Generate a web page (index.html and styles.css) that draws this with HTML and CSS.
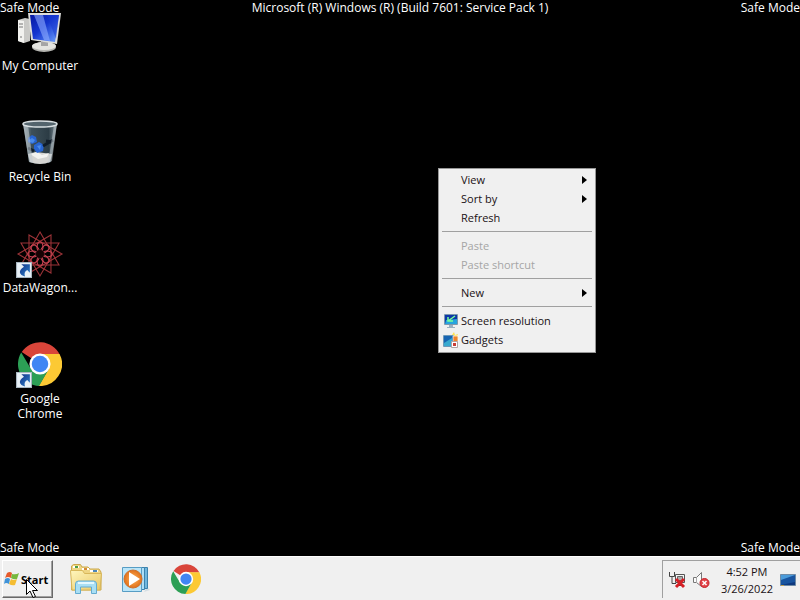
FILE: index.html
```html
<!DOCTYPE html>
<html lang="en">
<head>
<meta charset="utf-8">
<title>Desktop</title>
<link rel="stylesheet" href="styles.css">
</head>
<body>
<svg class="defs" aria-hidden="true">
  <defs>
    <linearGradient id="screen" x1="0" y1="0" x2="1" y2="1"><stop offset="0" stop-color="#0618a0"/><stop offset=".45" stop-color="#1435d0"/><stop offset="1" stop-color="#6fa4ff"/></linearGradient>
    <linearGradient id="glass" x1="0" y1="0" x2="1" y2="0"><stop offset="0" stop-color="#8b9ba2"/><stop offset=".25" stop-color="#3e5059"/><stop offset=".75" stop-color="#2c3c45"/><stop offset="1" stop-color="#84949b"/></linearGradient>
    <linearGradient id="folder" x1="0" y1="0" x2="1" y2="1"><stop offset="0" stop-color="#fff6bd"/><stop offset="1" stop-color="#e9c765"/></linearGradient>
    <linearGradient id="arrow" x1="0" y1="0" x2="1" y2="1"><stop offset="0" stop-color="#12358a"/><stop offset="1" stop-color="#2d7fc8"/></linearGradient>
    <radialGradient id="orange"><stop offset="0" stop-color="#ffb45a"/><stop offset="1" stop-color="#e0701a"/></radialGradient>
    <symbol id="chrome" viewBox="0 0 48 48">
      <path fill="#d9453a" d="M24 24 4.1 11A24 24 0 0 1 45.5 13.500H24Z"/>
      <path fill="#fcc934" d="M24 13h21.300A24 24 0 0 1 22.500 48L33.500 29.500Z"/>
      <path fill="#2c9f55" d="M3.500 11.500 14.500 30l9.500 5 9-4.500L23 48A24 24 0 0 1 3.500 11.500Z"/>
      <circle cx="24" cy="24" r="11.500" fill="#fff"/><circle cx="24" cy="24" r="9" fill="#4086f4"/>
    </symbol>
    <symbol id="shortcut" viewBox="0 0 15 15">
      <path fill="#e8f1f7" stroke="#a8b6c0" d="M.5.5h14v14H.5z"/>
      <path fill="url(#arrow)" d="M5 2h8v8l-2.500-2.500C8 9 7.500 11 8.500 13.500 3 12.500 1.500 8 7.500 4.500Z"/>
    </symbol>
  </defs>
</svg>

<main class="desktop">
  <header class="watermark"><span>Safe Mode</span><span>Microsoft (R) Windows (R) (Build 7601: Service Pack 1)</span><span>Safe Mode</span></header>

  <nav class="shortcuts" aria-label="Desktop icons">
    <button class="shortcut">
      <svg viewBox="0 0 48 48">
        <path fill="#c9c9c6" d="m2 12 7-2 5 1v22l-6 2-6-2Z"/><path fill="#f2f2ef" d="m2 12 6 1v22l-6-2Z"/><path stroke="#777" d="M3 16h4M3 19h4M4 29h2"/>
        <path fill="#aaa" d="m27 33 8 1v6h-9Z"/><ellipse cx="28" cy="39" rx="12" ry="5" fill="#b5b5b1"/><ellipse cx="28" cy="38" rx="12" ry="4" fill="#e4e4e0"/><path fill="#a5a5a5" d="m25 33 7 1v4h-7Z"/>
        <path fill="#ddddda" d="m12 5 33 0-4 31-26-4Z"/><path fill="url(#screen)" d="m14 7 29 0-4 27-22-3Z"/><path fill="#8dabff" opacity=".6" d="m18 7 9 0 7 26-6-1Z"/><path fill="#1839cf" opacity=".5" d="m31 7 12 0-3 24Z"/>
      </svg>
      <span>My Computer</span>
    </button>
    <button class="shortcut">
      <svg viewBox="0 0 48 48">
        <path fill="url(#glass)" d="M7 4h34l-6 39q-11 4-22 0Z"/><path fill="#d5d5d2" d="m12 35 8-2 8 1 8 1-2 8q-10 4-20 0Z"/><path fill="#f3f3f0" d="m14 35 7-2 5 3 7-2-2 4-9 2Z"/>
        <path fill="#2865d2" d="m12 19 4-3 4 2 1 5-5 2-4-2Zm6 7 5-3 5 3-1 6-6 2-3-4Z"/><path fill="#4a8bea" d="m13 21 3-2 3 2-2 3-3-1Zm8 6 4-1-1 5Z"/><path fill="none" stroke="#101c29" stroke-width="3" d="m12 29 6 3m9-5 10-6m-7 1 6 1"/>
        <path fill="#c1cbd0" opacity=".55" d="m7 5 5 1 5 38-4-1Zm34 0-3 1-6 38 4-2Z"/><ellipse cx="24" cy="5" rx="17" ry="3" fill="#53646d" stroke="#d8dfe2" stroke-width="1.500"/>
      </svg>
      <span>Recycle Bin</span>
    </button>
    <button class="shortcut">
      <svg viewBox="0 0 48 48">
        <g fill="none" stroke="#9c3338" stroke-width="1.100">
          <g id="square"><path d="M24 2 43 35H5Z"/></g>
          <use href="#square" transform="rotate(30 24 24)"/><use href="#square" transform="rotate(60 24 24)"/><use href="#square" transform="rotate(90 24 24)"/>
          <g stroke="#cf4657">
            <ellipse id="petal" cx="24" cy="17" rx="3" ry="5"/>
            <use href="#petal" transform="rotate(45 24 24)"/><use href="#petal" transform="rotate(90 24 24)"/><use href="#petal" transform="rotate(135 24 24)"/><use href="#petal" transform="rotate(180 24 24)"/><use href="#petal" transform="rotate(225 24 24)"/><use href="#petal" transform="rotate(270 24 24)"/><use href="#petal" transform="rotate(315 24 24)"/>
          </g>
        </g>
        <circle cx="24" cy="24" r="4" fill="#160204"/><use href="#shortcut" x="0" y="32" width="16" height="16"/>
      </svg>
      <span>DataWagon...</span>
    </button>
    <button class="shortcut">
      <svg viewBox="0 0 48 48"><use href="#chrome" x="2" y="1" width="44" height="44"/><use href="#shortcut" x="0" y="31" width="16" height="16"/></svg>
      <span>Google Chrome</span>
    </button>
  </nav>

  <div class="menu" role="menu">
    <button role="menuitem"><i></i><span>View</span><b></b></button>
    <button role="menuitem"><i></i><span>Sort by</span><b></b></button>
    <button role="menuitem"><i></i><span>Refresh</span></button>
    <hr>
    <button role="menuitem" disabled><i></i><span>Paste</span></button>
    <button role="menuitem" disabled><i></i><span>Paste shortcut</span></button>
    <hr>
    <button role="menuitem"><i></i><span>New</span><b></b></button>
    <hr>
    <button role="menuitem"><i><svg viewBox="0 0 16 16"><path fill="#c8d8e4" stroke="#7c98ad" d="M1.500 1.500h13v10h-13z"/><path fill="#0d36a8" d="M2 2h12v9H2z"/><path fill="#27a4de" d="m2 11 1-4 11-1v5Z"/><path d="m12 3-7 5m0-4v4h5" fill="none" stroke="#7cff96" stroke-width="1.500"/><path fill="#9ab0c0" d="M6 12h4v2h2v1H4v-1h2Z"/></svg></i><span>Screen resolution</span></button>
    <button role="menuitem"><i><svg viewBox="0 0 16 16"><path fill="#ffe14b" d="m11 0 1 3 3-1-1 3 2 1-5 2-2-5Z"/><path fill="#d9edf8" stroke="#6c98b8" d="M.5 3.500h10v11H.5z"/><path fill="#1765b2" d="M1 4h9v10H1z"/><path fill="#37a9cf" d="m1 11 8-5v8H1Z"/><path fill="#ef842b" stroke="#fff" stroke-width=".7" d="M10 4h5v6h-5z"/><path fill="#fff" stroke="#b0a4a4" d="M8.500 9.500h6v6h-6z"/><path fill="#c83e37" d="M10 11h3v3h-3z"/></svg></i><span>Gadgets</span></button>
  </div>

  <footer class="watermark"><span>Safe Mode</span><span>Safe Mode</span></footer>
</main>

<div class="taskbar">
  <button class="start">
    <svg viewBox="0 0 16 16"><path fill="#e65a2b" d="M3 2q3-2 5 0L7 7Q4 5 1 7Z"/><path fill="#77b83d" d="M8 3q4 1 7-1l-2 6q-3 1-6-1Z"/><path fill="#4093d8" d="M1 8q3-2 5 0l-1 5q-3-2-5 0Z"/><path fill="#f5bd32" d="M7 8q3 2 6 0l-2 6q-3 1-6-1Z"/></svg>
    <span>Start</span>
  </button>
  <nav class="pinned" aria-label="Pinned programs">
    <button class="pin" aria-label="Explorer"><svg viewBox="0 0 34 32"><path fill="#efd583" stroke="#cba84b" d="M2.500 27V3l2-1.500h7L13 4h6l2 2h9l2 3v18Z"/><path fill="#fff" d="M4 3h6v2H4zm9 2h7v2h-7zm8 2h8v2h-8z"/><path stroke="#4b9d45" stroke-width="2" d="M6 4h3"/><path stroke="#d38a3a" stroke-width="2" d="M15 6h3"/><path stroke="#4b86b9" stroke-width="2" d="M24 8h4"/><path fill="url(#folder)" stroke="#d8b75a" d="M1.500 7.500h12l2 3h17L31 27H3Z"/><path fill="#a9dff4" stroke="#64abd0" d="M6.500 30.500V21q0-3 3-3h15q3 0 3 3v9.500h-5V24h-11v6.500Z"/><path stroke="#e3f8ff" stroke-width="2" d="M9 20h16"/></svg></button>
    <button class="pin" aria-label="Media Player"><svg viewBox="0 0 32 32"><path fill="#d4dee4" d="m24 29 6-2-3-3Z"/><path fill="#70b7de" stroke="#3c83ad" d="M9.500 4.500h18v21h-18z"/><path fill="#afdef6" stroke="#3c83ad" d="M6.500 4.500h18v22h-18z"/><path fill="#b9e5f9" stroke="#579dc4" d="M2.500 4.500h19v24h-19z"/><circle cx="13" cy="16" r="9" fill="url(#orange)" stroke="#cc702d"/><path fill="#fff" d="m9 9 11 7-11 7Z"/></svg></button>
    <button class="pin" aria-label="Chrome"><svg viewBox="0 0 32 32"><use href="#chrome" x="1" y="1" width="30" height="30"/></svg></button>
  </nav>
  <div class="tray">
    <button class="tray-icon" aria-label="Network"><svg viewBox="0 0 18 18"><path fill="#f5f5f5" stroke="#555" d="M7.500 3.500h9v8h-9z"/><path fill="#aaa" stroke="#666" d="M9.500 5.500h5v4h-5z"/><path fill="none" stroke="#444" d="M1.500 1v4.500h5V1M4 6v6.500h4M8 14.500h8"/><path stroke="#d51f25" stroke-width="3" d="m8 8 8 8m0-8-8 8"/></svg></button>
    <button class="tray-icon" aria-label="Volume"><svg viewBox="0 0 18 18"><path fill="#fafafa" stroke="#777" d="M1.500 6.500h3l5-5v14l-5-4h-3Z"/><path stroke="#aaa" d="M4.500 7v5"/><circle cx="12.500" cy="12" r="4.500" fill="#e24247" stroke="#c6242b"/><path stroke="#fff" stroke-width="1.500" d="m10.500 10 4 4m0-4-4 4"/></svg></button>
    <button class="clock"><span>4:52 PM</span><span>3/26/2022</span></button>
    <button class="tray-icon" aria-label="Show desktop"><svg viewBox="0 0 18 18"><path fill="#18549f" stroke="#6e8ba6" d="M1.500 3.500h15v11h-15z"/><path fill="#4b9bda" d="M2 4h14L2 9Z"/><path fill="#0e397f" d="M2 14h14v-3Z"/><path fill="#c8a14b" d="M2 14h3v1H2z"/></svg></button>
  </div>
</div>
<svg class="cursor" viewBox="0 0 12 19" aria-hidden="true"><path fill="#fff" stroke="#000" d="M.5.500v15l3.500-3.500 3 6.500 2.500-1-3-6h5Z"/></svg>
</body>
</html>
```
FILE: styles.css
```css
* {
  box-sizing: border-box;
}

body {
  display: flex;
  flex-direction: column;
  min-height: 100vh;
  margin: 0;
  background: #000;
  color: #fff;
  font: 12px/15px "Open Sans", "Noto Sans", sans-serif;
}

button {
  margin: 0;
  padding: 0;
  border: 0;
  background: none;
  color: inherit;
  font: inherit;
}

svg {
  display: block;
}

.defs {
  position: absolute;
  width: 0;
  height: 0;
}

.desktop {
  position: relative;
  display: flex;
  flex: 1;
  flex-direction: column;
}

.watermark {
  display: flex;
  justify-content: space-between;
  height: 16px;
}

.shortcuts {
  display: flex;
  flex: 1;
  flex-direction: column;
  align-items: flex-start;
  margin-top: -8px;
}

.shortcut {
  display: flex;
  flex-direction: column;
  align-items: center;
  gap: 2px;
  width: 80px;
  height: 111px;
}

.shortcut svg {
  width: 48px;
  height: 48px;
}

.menu {
  position: absolute;
  top: 168px;
  left: 438px;
  width: 158px;
  padding: 1px 2px 3px;
  border: 1px solid #979797;
  background: #f0f0f0;
  color: #1a1014;
  font-size: 11px;
}

.menu button {
  display: flex;
  align-items: center;
  width: 100%;
  height: 19px;
  padding: 0 6px 0 2px;
  text-align: left;
}

.menu button:disabled {
  color: #a5a5a5;
}

.menu i {
  width: 18px;
}

.menu i svg {
  width: 16px;
  height: 16px;
}

.menu span {
  flex: 1;
}

.menu b {
  border: 4px solid transparent;
  border-right: 0;
  border-left: 5px solid #000;
}

.menu hr {
  height: 1px;
  margin: 4px 1px;
  border: 0;
  background: #a0a0a0;
}

.taskbar {
  display: flex;
  height: 44px;
  padding: 3px 0 2px 2px;
  border-top: 1px solid #fff;
  background: #f0f0f0;
  color: #1a1014;
  font-size: 11px;
}

.start {
  display: flex;
  align-items: center;
  gap: 1px;
  width: 51px;
  padding-left: 1px;
  border: 1px solid;
  border-color: #fff #696969 #696969 #fff;
  box-shadow: inset -1px -1px #a0a0a0;
  color: #000;
  font-weight: 700;
}

.start svg {
  width: 16px;
  height: 16px;
}

.pinned {
  display: flex;
  flex: 1;
  gap: 16px;
  align-items: center;
  padding-left: 16px;
}

.pin svg {
  width: 34px;
  height: 32px;
}

.tray {
  display: flex;
  align-items: center;
  gap: 6px;
  padding: 0 3px 0 5px;
  border-top: 1px solid #a0a0a0;
  border-left: 1px solid #a0a0a0;
}

.tray-icon svg {
  width: 18px;
  height: 18px;
}

.clock {
  display: flex;
  flex-direction: column;
  align-items: center;
  padding: 0 0 0 5px;
  line-height: 17px;
}

.cursor {
  position: absolute;
  top: 579px;
  left: 26px;
  width: 12px;
  height: 19px;
}
```
